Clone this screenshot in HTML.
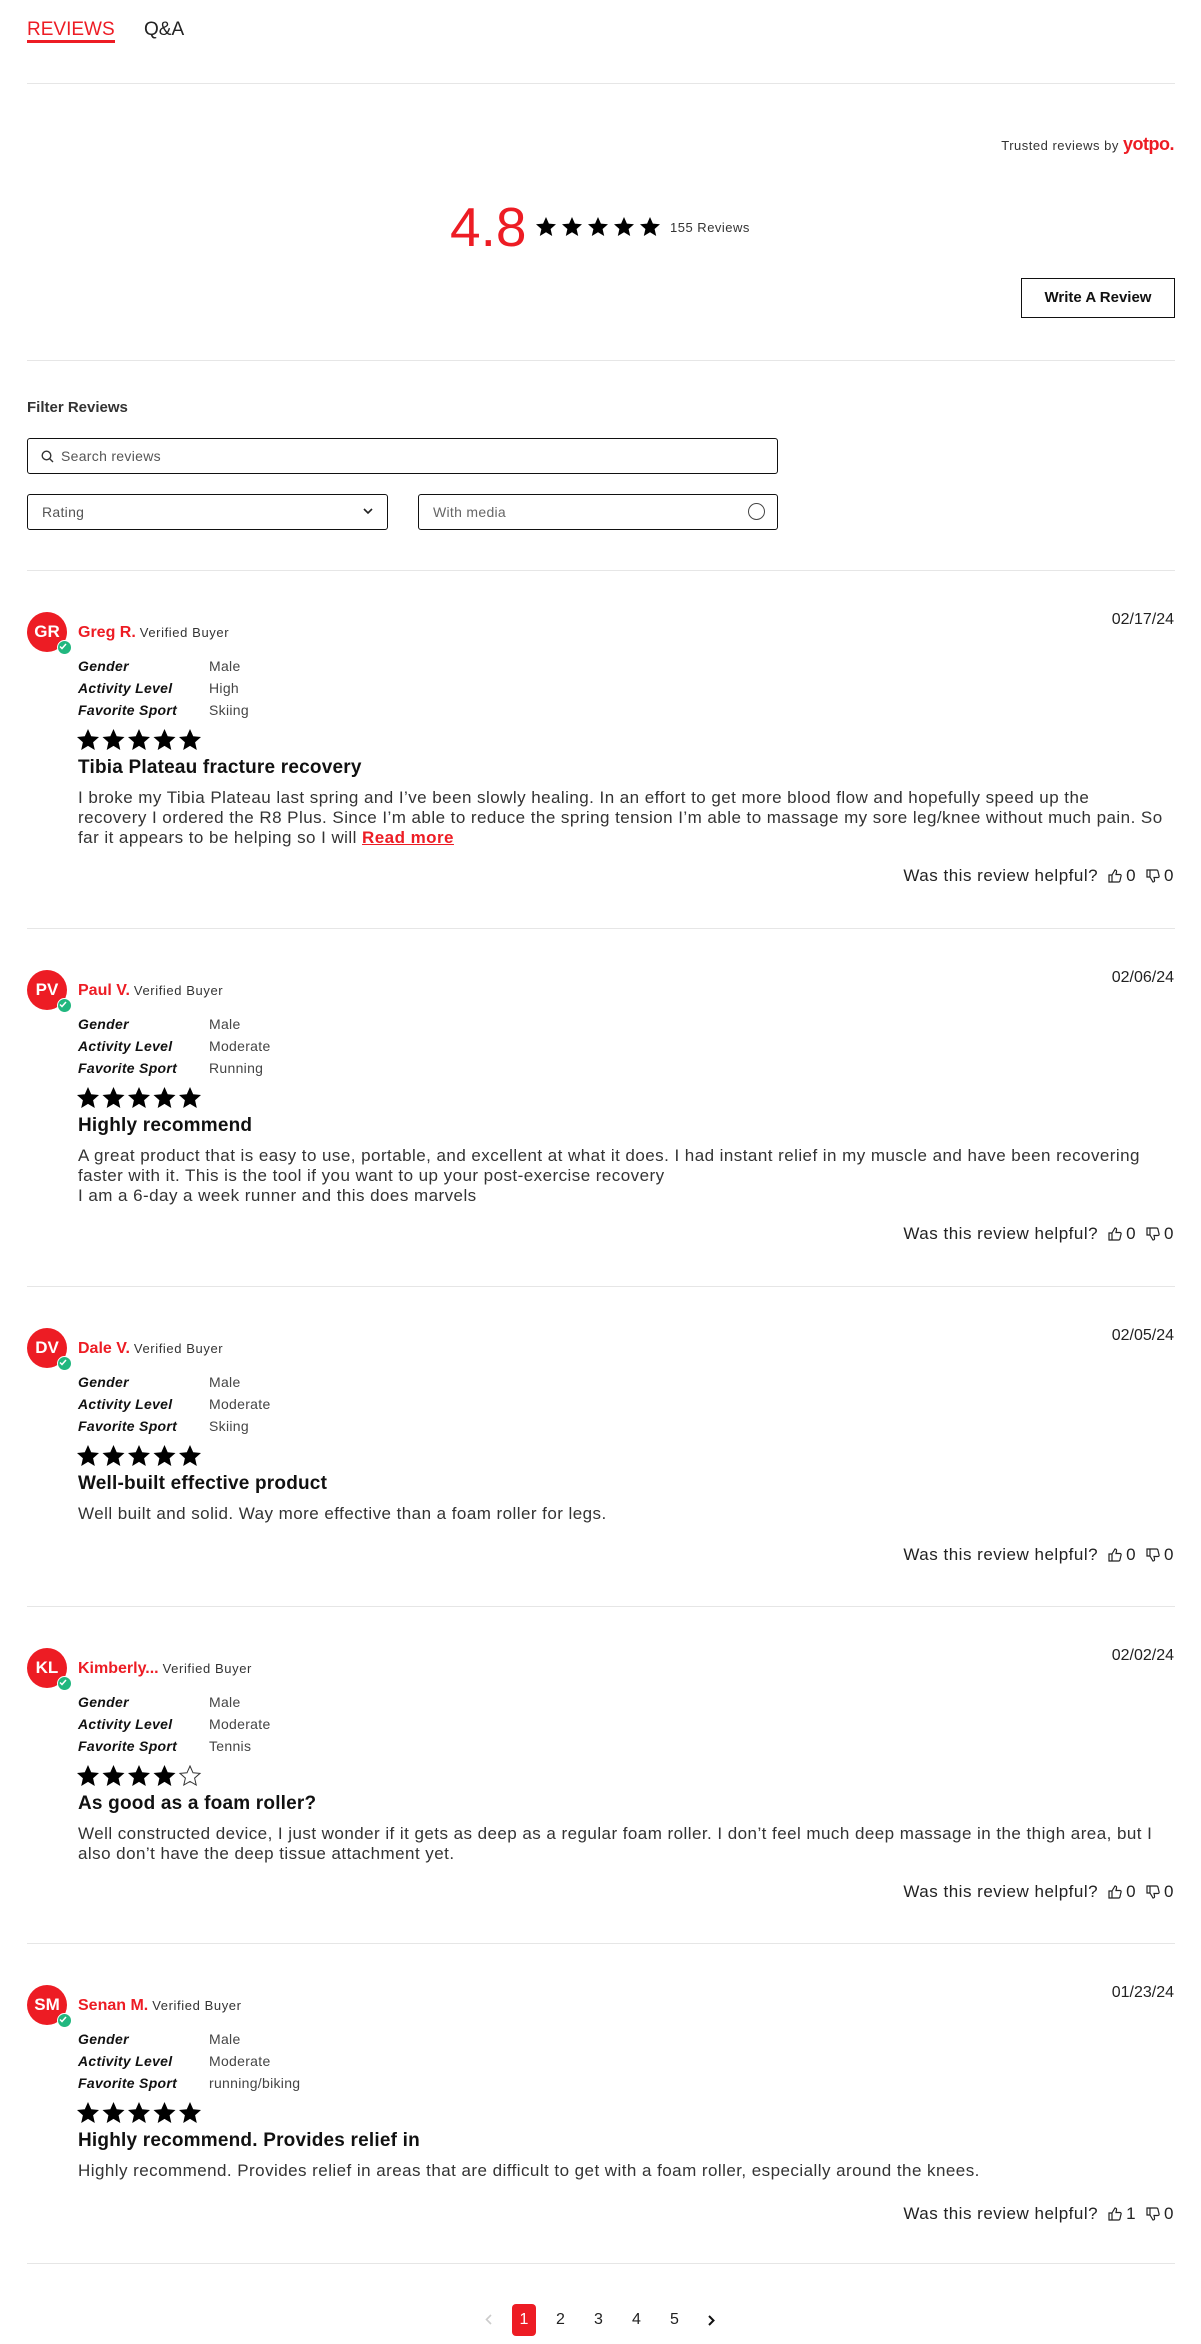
<!DOCTYPE html>
<html><head><meta charset="utf-8">
<style>
*{box-sizing:border-box;margin:0;padding:0}
body{width:1201px;height:2344px;background:#fff;font-family:"Liberation Sans",Arial,sans-serif;color:#222;position:relative;overflow:hidden}
.a{position:absolute;white-space:nowrap}
.hr{position:absolute;left:27px;width:1148px;height:1px;background:#e6e6e6}
.rv{position:absolute;left:0;width:1201px}
.av{position:absolute;left:27px;top:42px;width:40px;height:40px;border-radius:50%;background:#ed1c24;color:#fff;font-weight:700;font-size:17px;line-height:40px;text-align:center}
.bd{position:absolute;left:30px;top:28px;width:15px;height:15px;border-radius:50%;background:#21b77f;border:1.5px solid #fff}
.nm{position:absolute;left:78px;top:53px;line-height:20px;font-size:16px;color:#ed1c24;font-weight:600}
.nm span{font-size:13px;color:#333;font-weight:400;margin-left:4px;letter-spacing:0.6px}
.dt{position:absolute;right:27px;top:40px;line-height:20px;font-size:16px;color:#222}
.lb{position:absolute;left:78px;font-size:14px;font-style:italic;font-weight:700;line-height:22px;color:#111;letter-spacing:0.3px}
.vl{position:absolute;left:209px;font-size:14px;line-height:22px;color:#444;letter-spacing:0.3px}
.st{position:absolute;left:77px;top:159px}
.tt{position:absolute;left:78px;top:186px;font-size:19px;font-weight:700;line-height:24px;color:#111;letter-spacing:0.2px}
.bo{position:absolute;left:78px;top:218px;font-size:17px;line-height:20px;color:#333;white-space:nowrap;letter-spacing:0.45px}
.bo a{color:#ed1c24;font-weight:700;text-decoration:underline}
.hp{position:absolute;right:27px;font-size:17px;line-height:20px;color:#222;display:flex;align-items:center;gap:4px;white-space:nowrap;letter-spacing:0.5px}
.hp svg{margin-left:6px}
</style></head><body>

<div class="a" style="left:27px;top:19px;font-size:19px;color:#ed1c24;line-height:22px">REVIEWS</div>
<div class="a" style="left:27px;top:40px;width:88px;height:3px;background:#ed1c24"></div>
<div class="a" style="left:144px;top:19px;font-size:19px;color:#222;line-height:22px">Q&amp;A</div>
<div class="hr" style="top:83px"></div>

<div class="a" style="right:27px;top:133px;line-height:22px;font-size:13px;color:#333;letter-spacing:0.5px">Trusted reviews by <b style="color:#ed1c24;font-size:18px;font-weight:900;letter-spacing:-0.5px">yotpo.</b></div>

<div class="a" style="left:450px;top:198px;font-size:55px;line-height:58px;color:#ed1c24;font-weight:300">4.8</div>
<svg class="a" style="left:536px;top:217px" width="126" height="20" viewBox="0 0 126 20">
<g fill="#000">
<polygon points="10,0 12.9,6.6 20,7.3 14.6,12 16.2,19 10,15.3 3.8,19 5.4,12 0,7.3 7.1,6.6"/>
<polygon transform="translate(26,0)" points="10,0 12.9,6.6 20,7.3 14.6,12 16.2,19 10,15.3 3.8,19 5.4,12 0,7.3 7.1,6.6"/>
<polygon transform="translate(52,0)" points="10,0 12.9,6.6 20,7.3 14.6,12 16.2,19 10,15.3 3.8,19 5.4,12 0,7.3 7.1,6.6"/>
<polygon transform="translate(78,0)" points="10,0 12.9,6.6 20,7.3 14.6,12 16.2,19 10,15.3 3.8,19 5.4,12 0,7.3 7.1,6.6"/>
<polygon transform="translate(104,0)" points="10,0 12.9,6.6 20,7.3 14.6,12 16.2,19 10,15.3 3.8,19 5.4,12 0,7.3 7.1,6.6"/>
</g></svg>
<div class="a" style="left:670px;top:219px;font-size:13px;line-height:18px;color:#333;letter-spacing:0.5px">155 Reviews</div>

<div class="a" style="left:1021px;top:278px;width:154px;height:40px;border:1.5px solid #111;font-size:15px;font-weight:700;line-height:37px;text-align:center;color:#111">Write A Review</div>
<div class="hr" style="top:360px"></div>

<div class="a" style="left:27px;top:398px;font-size:15px;font-weight:700;line-height:20px;color:#333">Filter Reviews</div>
<div class="a" style="left:27px;top:438px;width:751px;height:36px;border:1.5px solid #111;border-radius:3px"></div>
<svg class="a" style="left:41px;top:450px" width="13" height="13" viewBox="0 0 13 13"><circle cx="5.5" cy="5.5" r="4.3" fill="none" stroke="#333" stroke-width="1.4"/><line x1="8.6" y1="8.6" x2="12" y2="12" stroke="#333" stroke-width="1.4"/></svg>
<div class="a" style="left:61px;top:446px;font-size:14px;line-height:20px;color:#555;letter-spacing:0.3px">Search reviews</div>

<div class="a" style="left:27px;top:494px;width:361px;height:36px;border:1.5px solid #111;border-radius:3px"></div>
<div class="a" style="left:42px;top:502px;font-size:14px;line-height:20px;color:#555;letter-spacing:0.3px">Rating</div>
<svg class="a" style="left:363px;top:508px" width="10" height="7" viewBox="0 0 10 7"><polyline points="1,1 5,5 9,1" fill="none" stroke="#222" stroke-width="1.6"/></svg>
<div class="a" style="left:418px;top:494px;width:360px;height:36px;border:1.5px solid #111;border-radius:3px"></div>
<div class="a" style="left:433px;top:502px;font-size:14px;line-height:20px;color:#666;letter-spacing:0.3px">With media</div>
<div class="a" style="left:748px;top:503px;width:17px;height:17px;border:1.2px solid #444;border-radius:50%"></div>
<div class="hr" style="top:570px"></div>

<!-- Review 1 -->
<div class="rv" style="top:570px">
<div class="av">GR<div class="bd"></div></div>
<svg style="position:absolute;left:59px;top:73px" width="8" height="7" viewBox="0 0 8 7"><polyline points="1,3.5 3,5.5 7,1" fill="none" stroke="#fff" stroke-width="1.5"/></svg>
<div class="nm">Greg R.<span>Verified Buyer</span></div>
<div class="dt">02/17/24</div>
<div class="lb" style="top:85px">Gender</div><div class="vl" style="top:85px">Male</div>
<div class="lb" style="top:107px">Activity Level</div><div class="vl" style="top:107px">High</div>
<div class="lb" style="top:129px">Favorite Sport</div><div class="vl" style="top:129px">Skiing</div>
<svg class="st" width="126" height="22" viewBox="0 0 126 22"><g fill="#000"><polygon points="11,0 14.2,7.3 22,8 16.1,13.2 17.8,21 11,16.9 4.2,21 5.9,13.2 0,8 7.8,7.3"/><polygon transform="translate(25.5,0)" points="11,0 14.2,7.3 22,8 16.1,13.2 17.8,21 11,16.9 4.2,21 5.9,13.2 0,8 7.8,7.3"/><polygon transform="translate(51,0)" points="11,0 14.2,7.3 22,8 16.1,13.2 17.8,21 11,16.9 4.2,21 5.9,13.2 0,8 7.8,7.3"/><polygon transform="translate(76.5,0)" points="11,0 14.2,7.3 22,8 16.1,13.2 17.8,21 11,16.9 4.2,21 5.9,13.2 0,8 7.8,7.3"/><polygon transform="translate(102,0)" points="11,0 14.2,7.3 22,8 16.1,13.2 17.8,21 11,16.9 4.2,21 5.9,13.2 0,8 7.8,7.3"/></g></svg>
<div class="tt">Tibia Plateau fracture recovery</div>
<div class="bo">I broke my Tibia Plateau last spring and I’ve been slowly healing. In an effort to get more blood flow and hopefully speed up the<br>recovery I ordered the R8 Plus. Since I’m able to reduce the spring tension I’m able to massage my sore leg/knee without much pain. So<br>far it appears to be helping so I will <a>Read more</a></div>
<div class="hp" style="top:296px">Was this review helpful?
<svg width="14" height="14" viewBox="0 0 14 14"><path d="M1 6h3v7H1zM4 6l3-5c1.2 0 1.8.8 1.5 2L8 5.5h4c.8 0 1.3.7 1.1 1.4l-1.2 5c-.2.6-.6 1.1-1.3 1.1H4" fill="none" stroke="#222" stroke-width="1.2"/></svg>0
<svg width="14" height="14" viewBox="0 0 14 14"><path d="M1 1h3v7H1zM4 8l3 5c1.2 0 1.8-.8 1.5-2L8 8.5h4c.8 0 1.3-.7 1.1-1.4l-1.2-5C11.7 1.5 11.3 1 10.6 1H4" fill="none" stroke="#222" stroke-width="1.2"/></svg>0</div>
</div>
<div class="hr" style="top:928px"></div>

<!-- Review 2 -->
<div class="rv" style="top:928px">
<div class="av">PV<div class="bd"></div></div>
<svg style="position:absolute;left:59px;top:73px" width="8" height="7" viewBox="0 0 8 7"><polyline points="1,3.5 3,5.5 7,1" fill="none" stroke="#fff" stroke-width="1.5"/></svg>
<div class="nm">Paul V.<span>Verified Buyer</span></div>
<div class="dt">02/06/24</div>
<div class="lb" style="top:85px">Gender</div><div class="vl" style="top:85px">Male</div>
<div class="lb" style="top:107px">Activity Level</div><div class="vl" style="top:107px">Moderate</div>
<div class="lb" style="top:129px">Favorite Sport</div><div class="vl" style="top:129px">Running</div>
<svg class="st" width="126" height="22" viewBox="0 0 126 22"><g fill="#000"><polygon points="11,0 14.2,7.3 22,8 16.1,13.2 17.8,21 11,16.9 4.2,21 5.9,13.2 0,8 7.8,7.3"/><polygon transform="translate(25.5,0)" points="11,0 14.2,7.3 22,8 16.1,13.2 17.8,21 11,16.9 4.2,21 5.9,13.2 0,8 7.8,7.3"/><polygon transform="translate(51,0)" points="11,0 14.2,7.3 22,8 16.1,13.2 17.8,21 11,16.9 4.2,21 5.9,13.2 0,8 7.8,7.3"/><polygon transform="translate(76.5,0)" points="11,0 14.2,7.3 22,8 16.1,13.2 17.8,21 11,16.9 4.2,21 5.9,13.2 0,8 7.8,7.3"/><polygon transform="translate(102,0)" points="11,0 14.2,7.3 22,8 16.1,13.2 17.8,21 11,16.9 4.2,21 5.9,13.2 0,8 7.8,7.3"/></g></svg>
<div class="tt">Highly recommend</div>
<div class="bo">A great product that is easy to use, portable, and excellent at what it does. I had instant relief in my muscle and have been recovering<br>faster with it. This is the tool if you want to up your post-exercise recovery<br>I am a 6-day a week runner and this does marvels</div>
<div class="hp" style="top:296px">Was this review helpful?
<svg width="14" height="14" viewBox="0 0 14 14"><path d="M1 6h3v7H1zM4 6l3-5c1.2 0 1.8.8 1.5 2L8 5.5h4c.8 0 1.3.7 1.1 1.4l-1.2 5c-.2.6-.6 1.1-1.3 1.1H4" fill="none" stroke="#222" stroke-width="1.2"/></svg>0
<svg width="14" height="14" viewBox="0 0 14 14"><path d="M1 1h3v7H1zM4 8l3 5c1.2 0 1.8-.8 1.5-2L8 8.5h4c.8 0 1.3-.7 1.1-1.4l-1.2-5C11.7 1.5 11.3 1 10.6 1H4" fill="none" stroke="#222" stroke-width="1.2"/></svg>0</div>
</div>
<div class="hr" style="top:1286px"></div>

<!-- Review 3 -->
<div class="rv" style="top:1286px">
<div class="av">DV<div class="bd"></div></div>
<svg style="position:absolute;left:59px;top:73px" width="8" height="7" viewBox="0 0 8 7"><polyline points="1,3.5 3,5.5 7,1" fill="none" stroke="#fff" stroke-width="1.5"/></svg>
<div class="nm">Dale V.<span>Verified Buyer</span></div>
<div class="dt">02/05/24</div>
<div class="lb" style="top:85px">Gender</div><div class="vl" style="top:85px">Male</div>
<div class="lb" style="top:107px">Activity Level</div><div class="vl" style="top:107px">Moderate</div>
<div class="lb" style="top:129px">Favorite Sport</div><div class="vl" style="top:129px">Skiing</div>
<svg class="st" width="126" height="22" viewBox="0 0 126 22"><g fill="#000"><polygon points="11,0 14.2,7.3 22,8 16.1,13.2 17.8,21 11,16.9 4.2,21 5.9,13.2 0,8 7.8,7.3"/><polygon transform="translate(25.5,0)" points="11,0 14.2,7.3 22,8 16.1,13.2 17.8,21 11,16.9 4.2,21 5.9,13.2 0,8 7.8,7.3"/><polygon transform="translate(51,0)" points="11,0 14.2,7.3 22,8 16.1,13.2 17.8,21 11,16.9 4.2,21 5.9,13.2 0,8 7.8,7.3"/><polygon transform="translate(76.5,0)" points="11,0 14.2,7.3 22,8 16.1,13.2 17.8,21 11,16.9 4.2,21 5.9,13.2 0,8 7.8,7.3"/><polygon transform="translate(102,0)" points="11,0 14.2,7.3 22,8 16.1,13.2 17.8,21 11,16.9 4.2,21 5.9,13.2 0,8 7.8,7.3"/></g></svg>
<div class="tt">Well-built effective product</div>
<div class="bo">Well built and solid. Way more effective than a foam roller for legs.</div>
<div class="hp" style="top:259px">Was this review helpful?
<svg width="14" height="14" viewBox="0 0 14 14"><path d="M1 6h3v7H1zM4 6l3-5c1.2 0 1.8.8 1.5 2L8 5.5h4c.8 0 1.3.7 1.1 1.4l-1.2 5c-.2.6-.6 1.1-1.3 1.1H4" fill="none" stroke="#222" stroke-width="1.2"/></svg>0
<svg width="14" height="14" viewBox="0 0 14 14"><path d="M1 1h3v7H1zM4 8l3 5c1.2 0 1.8-.8 1.5-2L8 8.5h4c.8 0 1.3-.7 1.1-1.4l-1.2-5C11.7 1.5 11.3 1 10.6 1H4" fill="none" stroke="#222" stroke-width="1.2"/></svg>0</div>
</div>
<div class="hr" style="top:1606px"></div>

<!-- Review 4 -->
<div class="rv" style="top:1606px">
<div class="av">KL<div class="bd"></div></div>
<svg style="position:absolute;left:59px;top:73px" width="8" height="7" viewBox="0 0 8 7"><polyline points="1,3.5 3,5.5 7,1" fill="none" stroke="#fff" stroke-width="1.5"/></svg>
<div class="nm">Kimberly...<span>Verified Buyer</span></div>
<div class="dt">02/02/24</div>
<div class="lb" style="top:85px">Gender</div><div class="vl" style="top:85px">Male</div>
<div class="lb" style="top:107px">Activity Level</div><div class="vl" style="top:107px">Moderate</div>
<div class="lb" style="top:129px">Favorite Sport</div><div class="vl" style="top:129px">Tennis</div>
<svg class="st" width="126" height="22" viewBox="0 0 126 22"><g fill="#000"><polygon points="11,0 14.2,7.3 22,8 16.1,13.2 17.8,21 11,16.9 4.2,21 5.9,13.2 0,8 7.8,7.3"/><polygon transform="translate(25.5,0)" points="11,0 14.2,7.3 22,8 16.1,13.2 17.8,21 11,16.9 4.2,21 5.9,13.2 0,8 7.8,7.3"/><polygon transform="translate(51,0)" points="11,0 14.2,7.3 22,8 16.1,13.2 17.8,21 11,16.9 4.2,21 5.9,13.2 0,8 7.8,7.3"/><polygon transform="translate(76.5,0)" points="11,0 14.2,7.3 22,8 16.1,13.2 17.8,21 11,16.9 4.2,21 5.9,13.2 0,8 7.8,7.3"/></g><polygon transform="translate(102,0)" points="11,1 14,7.8 21,8.4 15.6,13.1 17.2,20 11,16.4 4.8,20 6.4,13.1 1,8.4 8,7.8" fill="none" stroke="#333" stroke-width="1"/></svg>
<div class="tt">As good as a foam roller?</div>
<div class="bo">Well constructed device, I just wonder if it gets as deep as a regular foam roller. I don’t feel much deep massage in the thigh area, but I<br>also don’t have the deep tissue attachment yet.</div>
<div class="hp" style="top:276px">Was this review helpful?
<svg width="14" height="14" viewBox="0 0 14 14"><path d="M1 6h3v7H1zM4 6l3-5c1.2 0 1.8.8 1.5 2L8 5.5h4c.8 0 1.3.7 1.1 1.4l-1.2 5c-.2.6-.6 1.1-1.3 1.1H4" fill="none" stroke="#222" stroke-width="1.2"/></svg>0
<svg width="14" height="14" viewBox="0 0 14 14"><path d="M1 1h3v7H1zM4 8l3 5c1.2 0 1.8-.8 1.5-2L8 8.5h4c.8 0 1.3-.7 1.1-1.4l-1.2-5C11.7 1.5 11.3 1 10.6 1H4" fill="none" stroke="#222" stroke-width="1.2"/></svg>0</div>
</div>
<div class="hr" style="top:1943px"></div>

<!-- Review 5 -->
<div class="rv" style="top:1943px">
<div class="av">SM<div class="bd"></div></div>
<svg style="position:absolute;left:59px;top:73px" width="8" height="7" viewBox="0 0 8 7"><polyline points="1,3.5 3,5.5 7,1" fill="none" stroke="#fff" stroke-width="1.5"/></svg>
<div class="nm">Senan M.<span>Verified Buyer</span></div>
<div class="dt">01/23/24</div>
<div class="lb" style="top:85px">Gender</div><div class="vl" style="top:85px">Male</div>
<div class="lb" style="top:107px">Activity Level</div><div class="vl" style="top:107px">Moderate</div>
<div class="lb" style="top:129px">Favorite Sport</div><div class="vl" style="top:129px">running/biking</div>
<svg class="st" width="126" height="22" viewBox="0 0 126 22"><g fill="#000"><polygon points="11,0 14.2,7.3 22,8 16.1,13.2 17.8,21 11,16.9 4.2,21 5.9,13.2 0,8 7.8,7.3"/><polygon transform="translate(25.5,0)" points="11,0 14.2,7.3 22,8 16.1,13.2 17.8,21 11,16.9 4.2,21 5.9,13.2 0,8 7.8,7.3"/><polygon transform="translate(51,0)" points="11,0 14.2,7.3 22,8 16.1,13.2 17.8,21 11,16.9 4.2,21 5.9,13.2 0,8 7.8,7.3"/><polygon transform="translate(76.5,0)" points="11,0 14.2,7.3 22,8 16.1,13.2 17.8,21 11,16.9 4.2,21 5.9,13.2 0,8 7.8,7.3"/><polygon transform="translate(102,0)" points="11,0 14.2,7.3 22,8 16.1,13.2 17.8,21 11,16.9 4.2,21 5.9,13.2 0,8 7.8,7.3"/></g></svg>
<div class="tt">Highly recommend. Provides relief in</div>
<div class="bo">Highly recommend. Provides relief in areas that are difficult to get with a foam roller, especially around the knees.</div>
<div class="hp" style="top:261px">Was this review helpful?
<svg width="14" height="14" viewBox="0 0 14 14"><path d="M1 6h3v7H1zM4 6l3-5c1.2 0 1.8.8 1.5 2L8 5.5h4c.8 0 1.3.7 1.1 1.4l-1.2 5c-.2.6-.6 1.1-1.3 1.1H4" fill="none" stroke="#222" stroke-width="1.2"/></svg>1
<svg width="14" height="14" viewBox="0 0 14 14"><path d="M1 1h3v7H1zM4 8l3 5c1.2 0 1.8-.8 1.5-2L8 8.5h4c.8 0 1.3-.7 1.1-1.4l-1.2-5C11.7 1.5 11.3 1 10.6 1H4" fill="none" stroke="#222" stroke-width="1.2"/></svg>0</div>
</div>
<div class="hr" style="top:2263px"></div>

<!-- Pagination -->
<svg class="a" style="left:485px;top:2314px" width="7" height="11" viewBox="0 0 7 11"><polyline points="6,1 1.5,5.5 6,10" fill="none" stroke="#ccc" stroke-width="1.6"/></svg>
<div class="a" style="left:512px;top:2304px;width:24px;height:32px;background:#ed1c24;border-radius:4px;color:#fff;font-size:16px;line-height:32px;text-align:center">1</div>
<div class="a" style="left:556px;top:2310px;font-size:16px;line-height:20px">2</div>
<div class="a" style="left:594px;top:2310px;font-size:16px;line-height:20px">3</div>
<div class="a" style="left:632px;top:2310px;font-size:16px;line-height:20px">4</div>
<div class="a" style="left:670px;top:2310px;font-size:16px;line-height:20px">5</div>
<svg class="a" style="left:708px;top:2315px" width="7" height="11" viewBox="0 0 7 11"><polyline points="1,1 5.5,5.5 1,10" fill="none" stroke="#111" stroke-width="2"/></svg>

</body></html>
